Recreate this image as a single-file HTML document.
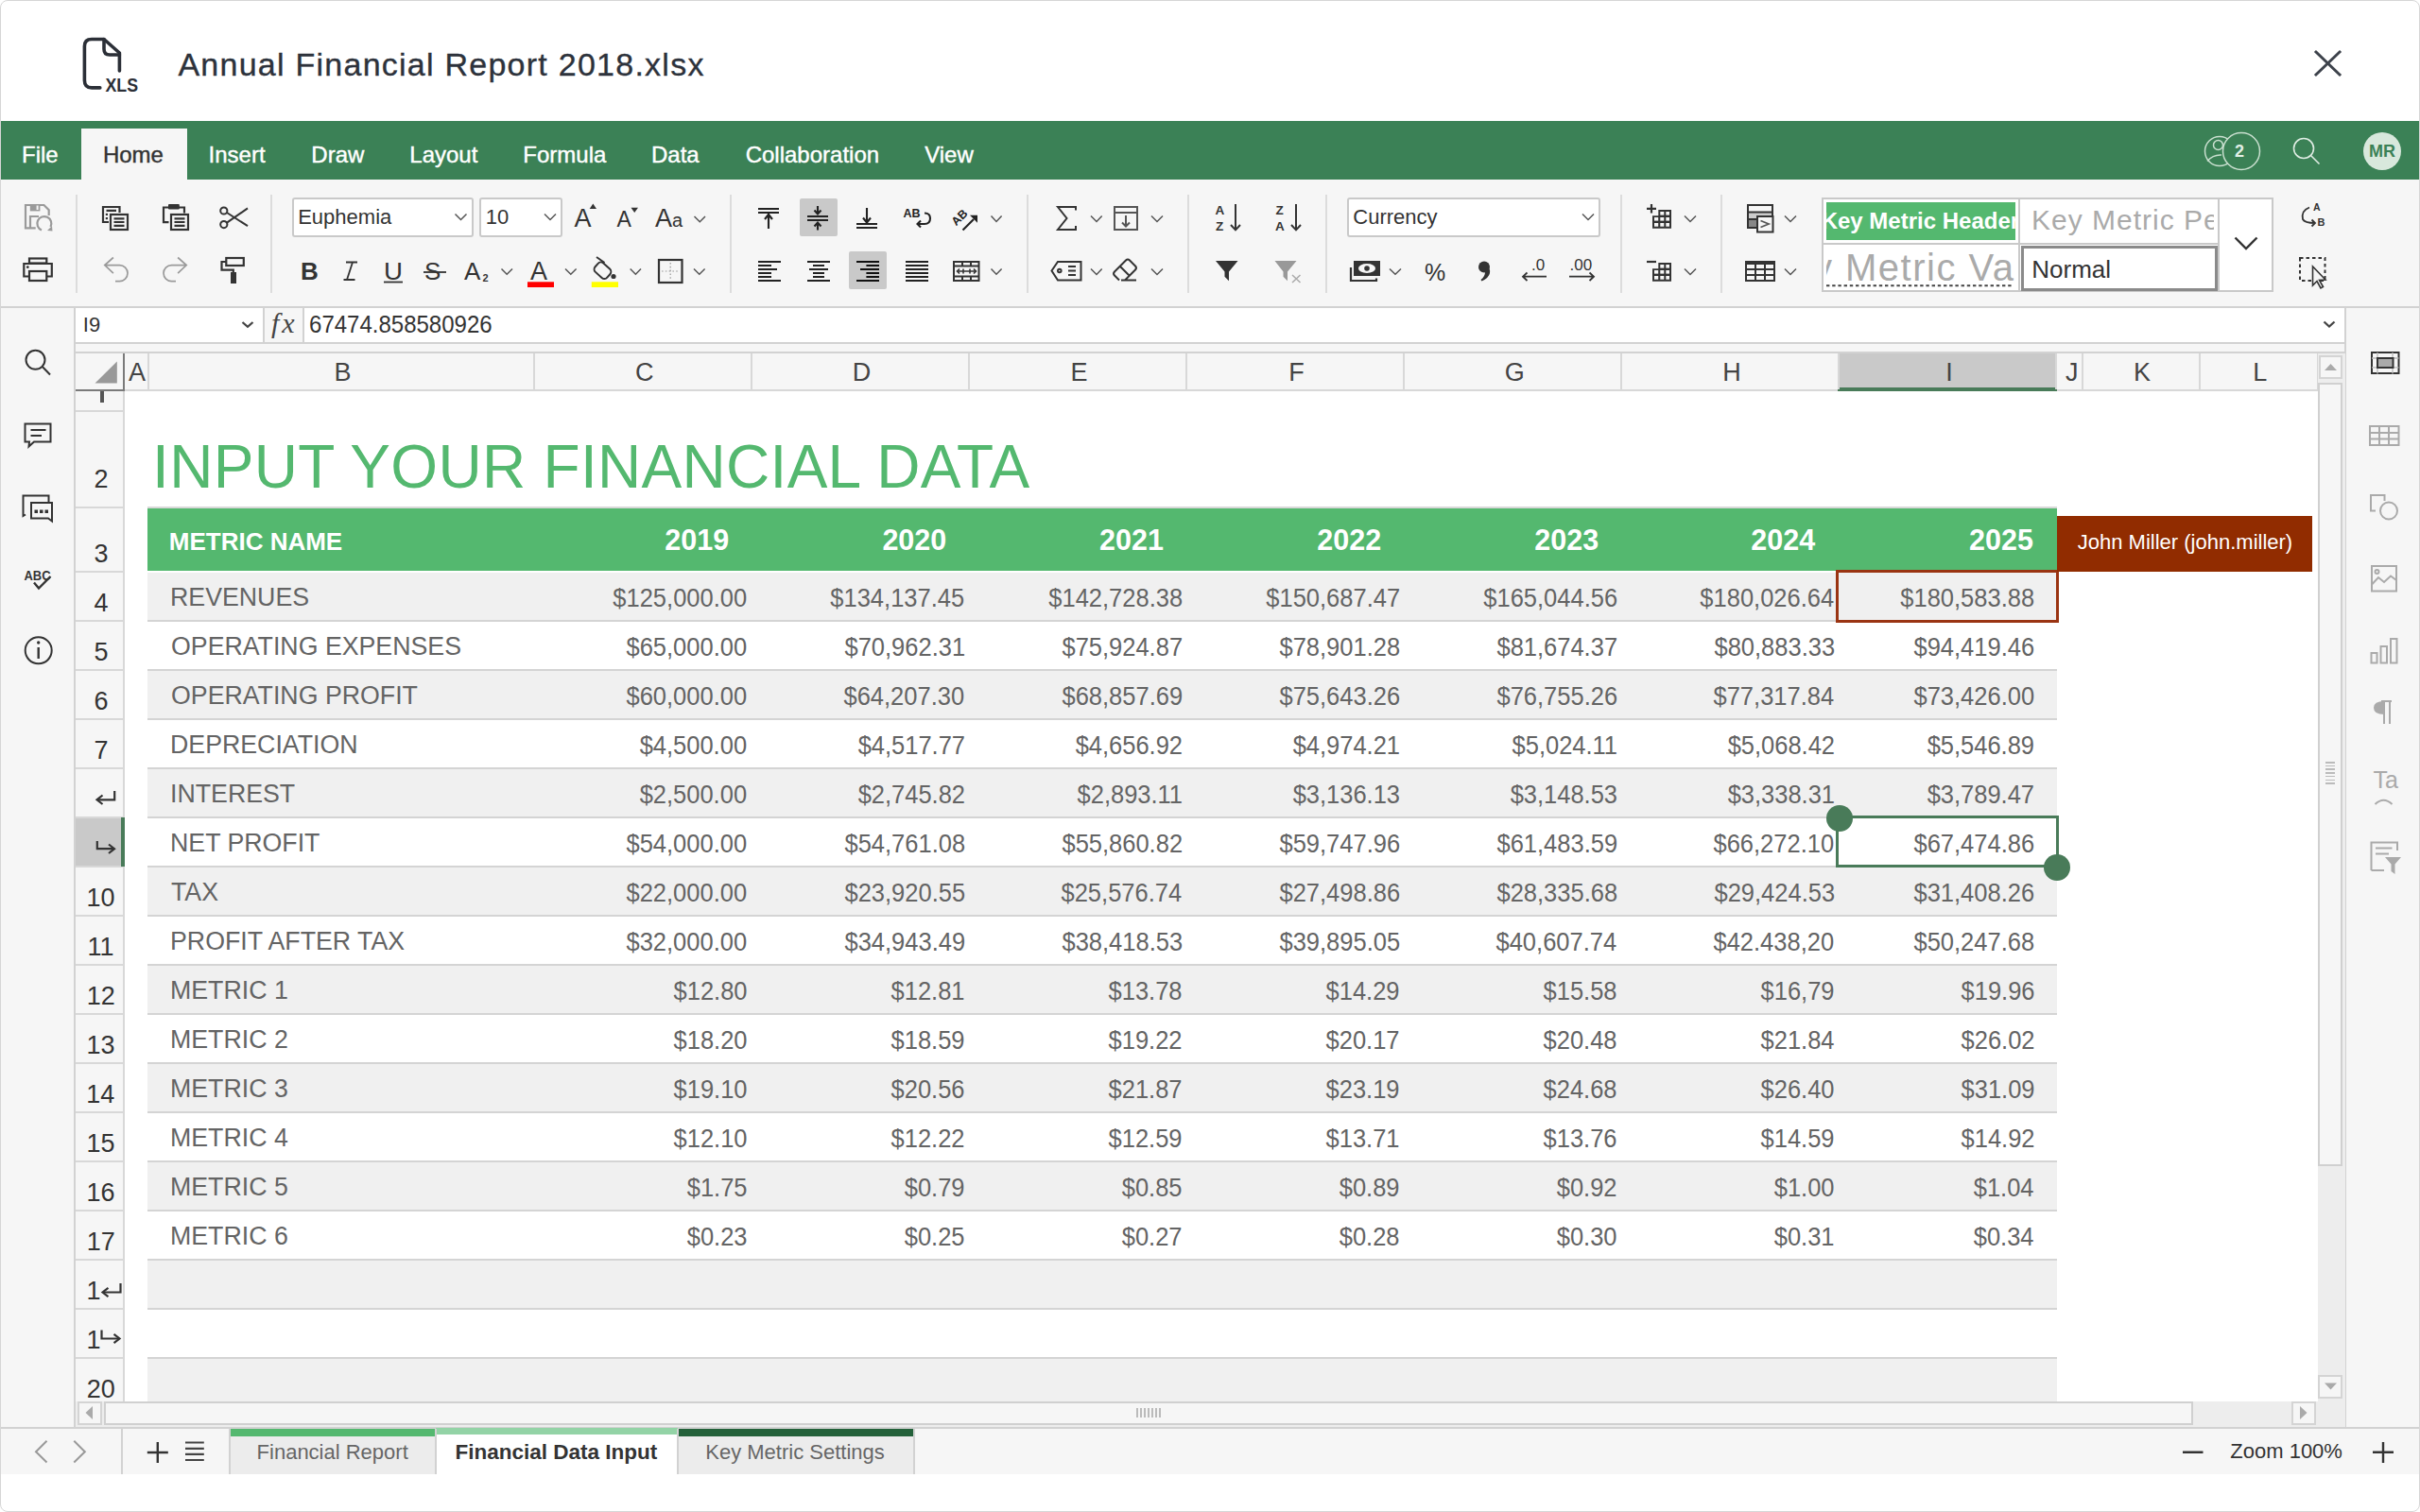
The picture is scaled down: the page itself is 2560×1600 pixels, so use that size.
<!DOCTYPE html>
<html><head><meta charset="utf-8"><title>Annual Financial Report 2018.xlsx</title>
<style>
html,body{margin:0;padding:0;}
body{width:2560px;height:1600px;position:relative;overflow:hidden;background:#fff;font-family:"Liberation Sans",sans-serif;}
.r{position:absolute;}
.t{position:absolute;white-space:nowrap;line-height:0;font-family:"Liberation Sans",sans-serif;}
.clip{position:absolute;overflow:hidden;}
#ic{position:absolute;left:0;top:0;width:2560px;height:1600px;pointer-events:none;}
#frame{position:absolute;left:0;top:0;width:2560px;height:1600px;box-sizing:border-box;border:1px solid #d6d6d6;border-radius:8px;pointer-events:none;}
</style></head><body>
<div class="r" style="left:0.00px;top:0.00px;width:2560.00px;height:128.00px;background:#fff;"></div>
<div class="t" style="left:188.43px;top:67.72px;font-size:34.00px;color:#2d323b;letter-spacing:1.25px;-webkit-text-stroke:0.35px #2d323b;">Annual Financial Report 2018.xlsx</div>
<div class="r" style="left:0.00px;top:128.00px;width:2560.00px;height:62.00px;background:#3b8156;"></div>
<div class="r" style="left:86.00px;top:136.00px;width:112.00px;height:54.00px;background:#f6f6f6;"></div>
<div class="t" style="left:23.03px;top:163.68px;font-size:24.00px;color:#fff;-webkit-text-stroke:0.4px #fff;">File</div>
<div class="t" style="left:108.93px;top:163.68px;font-size:24.00px;color:#333;-webkit-text-stroke:0.4px #333;">Home</div>
<div class="t" style="left:220.59px;top:163.68px;font-size:24.00px;color:#fff;-webkit-text-stroke:0.4px #fff;">Insert</div>
<div class="t" style="left:329.33px;top:163.68px;font-size:24.00px;color:#fff;-webkit-text-stroke:0.4px #fff;">Draw</div>
<div class="t" style="left:433.33px;top:163.68px;font-size:24.00px;color:#fff;-webkit-text-stroke:0.4px #fff;">Layout</div>
<div class="t" style="left:553.33px;top:163.68px;font-size:24.00px;color:#fff;-webkit-text-stroke:0.4px #fff;">Formula</div>
<div class="t" style="left:689.03px;top:163.68px;font-size:24.00px;color:#fff;-webkit-text-stroke:0.4px #fff;">Data</div>
<div class="t" style="left:788.68px;top:163.68px;font-size:24.00px;color:#fff;-webkit-text-stroke:0.4px #fff;">Collaboration</div>
<div class="t" style="left:978.19px;top:163.68px;font-size:24.00px;color:#fff;-webkit-text-stroke:0.4px #fff;">View</div>
<div class="r" style="left:0.00px;top:190.00px;width:2560.00px;height:134.00px;background:#f6f6f6;"></div>
<div class="r" style="left:0.00px;top:324.00px;width:2560.00px;height:2.00px;background:#d2d2d2;"></div>
<div class="r" style="left:80.00px;top:206.00px;width:2.00px;height:104.00px;background:#dcdcdc;"></div>
<div class="r" style="left:286.00px;top:206.00px;width:2.00px;height:104.00px;background:#dcdcdc;"></div>
<div class="r" style="left:772.00px;top:206.00px;width:2.00px;height:104.00px;background:#dcdcdc;"></div>
<div class="r" style="left:1086.00px;top:206.00px;width:2.00px;height:104.00px;background:#dcdcdc;"></div>
<div class="r" style="left:1256.00px;top:206.00px;width:2.00px;height:104.00px;background:#dcdcdc;"></div>
<div class="r" style="left:1402.00px;top:206.00px;width:2.00px;height:104.00px;background:#dcdcdc;"></div>
<div class="r" style="left:1714.00px;top:206.00px;width:2.00px;height:104.00px;background:#dcdcdc;"></div>
<div class="r" style="left:1820.00px;top:206.00px;width:2.00px;height:104.00px;background:#dcdcdc;"></div>
<div class="r" style="left:309.00px;top:209.00px;width:192.00px;height:42.00px;background:#fff;box-sizing:border-box;border:2px solid #c9c9c9;border-radius:3px;"></div>
<div class="t" style="left:315.20px;top:229.88px;font-size:22.00px;color:#333;">Euphemia</div>
<div class="r" style="left:507.00px;top:209.00px;width:88.00px;height:42.00px;background:#fff;box-sizing:border-box;border:2px solid #c9c9c9;border-radius:3px;"></div>
<div class="t" style="left:513.82px;top:229.88px;font-size:22.00px;color:#333;">10</div>
<div class="r" style="left:1425.00px;top:209.00px;width:268.00px;height:42.00px;background:#fff;box-sizing:border-box;border:2px solid #c9c9c9;border-radius:3px;"></div>
<div class="t" style="left:1431.28px;top:230.18px;font-size:22.00px;color:#333;">Currency</div>
<div class="r" style="left:846.00px;top:210.00px;width:40.00px;height:40.00px;background:#c9c9c9;border-radius:2px;"></div>
<div class="r" style="left:898.00px;top:266.00px;width:40.00px;height:40.00px;background:#c9c9c9;border-radius:2px;"></div>
<div class="r" style="left:1927.00px;top:209.00px;width:478.00px;height:100.00px;background:#fff;box-sizing:border-box;border:2px solid #c9c9c9;"></div>
<div class="r" style="left:1932.00px;top:214.00px;width:200.00px;height:40.00px;background:#54b86f;"></div>
<div class="r" style="left:2135.00px;top:209.00px;width:2.00px;height:100.00px;background:#c9c9c9;"></div>
<div class="r" style="left:1927.00px;top:257.00px;width:420.00px;height:2.00px;background:#c9c9c9;"></div>
<div class="r" style="left:2346.00px;top:209.00px;width:2.00px;height:100.00px;background:#c9c9c9;"></div>
<div class="clip" style="left:1932px;top:214px;width:200px;height:40px;">
<div class="t" style="left:-5.34px;top:20.08px;font-size:24.00px;color:#fff;font-weight:bold;">Key Metric Header</div>
</div>
<div class="clip" style="left:2138px;top:211px;width:204px;height:46px;">
<div class="t" style="left:10.94px;top:22.41px;font-size:30.00px;color:#aaa;letter-spacing:1.00px;">Key Metric Percent</div>
</div>
<div class="clip" style="left:1932px;top:259px;width:200px;height:48px;">
<div class="t" style="left:-66.00px;top:24.14px;font-size:40.00px;color:#aaa;letter-spacing:1.50px;">Key Metric Va</div>
</div>
<div class="r" style="left:2138.00px;top:260.00px;width:208.00px;height:47.50px;background:#fff;box-sizing:border-box;border:3px solid #8a8a8a;"></div>
<div class="t" style="left:2149.27px;top:284.99px;font-size:26.00px;color:#333;">Normal</div>
<div class="r" style="left:0.00px;top:326.00px;width:79.00px;height:1185.00px;background:#f6f6f6;"></div>
<div class="r" style="left:78.00px;top:326.00px;width:2.00px;height:1185.00px;background:#d2d2d2;"></div>
<div class="r" style="left:80.00px;top:326.00px;width:2401.00px;height:36.00px;background:#fff;"></div>
<div class="r" style="left:80.00px;top:362.00px;width:2401.00px;height:2.00px;background:#d2d2d2;"></div>
<div class="r" style="left:80.00px;top:364.00px;width:2401.00px;height:8.00px;background:#f6f6f6;"></div>
<div class="r" style="left:278.00px;top:326.00px;width:2.00px;height:36.00px;background:#d2d2d2;"></div>
<div class="r" style="left:280.00px;top:326.00px;width:41.00px;height:36.00px;background:#f6f6f6;"></div>
<div class="r" style="left:320.00px;top:326.00px;width:2.00px;height:36.00px;background:#d2d2d2;"></div>
<div class="t" style="left:87.87px;top:344.18px;font-size:22.00px;color:#333;">I9</div>
<div class="t" style="left:326.73px;top:343.34px;font-size:25.00px;color:#333;transform:scaleX(0.9600);transform-origin:1.27px 0;">67474.858580926</div>
<div class="t" style="left:287px;top:341.61px;font-family:'Liberation Serif';font-style:italic;font-size:30px;letter-spacing:3px;color:#444;">fx</div>
<div class="r" style="left:2481.00px;top:326.00px;width:79.00px;height:1185.00px;background:#f6f6f6;"></div>
<div class="r" style="left:2480.00px;top:326.00px;width:2.00px;height:1185.00px;background:#d2d2d2;"></div>
<div class="r" style="left:80.00px;top:372.00px;width:2401.00px;height:2.00px;background:#d2d2d2;"></div>
<div class="r" style="left:80.00px;top:374.00px;width:2372.00px;height:38.00px;background:#f6f6f6;"></div>
<div class="r" style="left:131.00px;top:412.00px;width:2321.00px;height:2.00px;background:#d8d8d8;"></div>
<div class="r" style="left:80.00px;top:412.00px;width:52.00px;height:2.00px;background:#7a7a7a;"></div>
<div class="r" style="left:130.00px;top:374.00px;width:2.00px;height:40.00px;background:#7a7a7a;"></div>
<div class="r" style="left:1944.00px;top:374.00px;width:232.00px;height:38.00px;background:#c9c9c9;"></div>
<div class="r" style="left:1944.00px;top:409.50px;width:232.00px;height:4.00px;background:#497b59;"></div>
<div class="r" style="left:156.00px;top:374.00px;width:2.00px;height:38.00px;background:#d8d8d8;"></div>
<div class="t" style="left:135.95px;top:394.24px;font-size:27.00px;color:#444;">A</div>
<div class="r" style="left:564.00px;top:374.00px;width:2.00px;height:38.00px;background:#d8d8d8;"></div>
<div class="t" style="left:353.60px;top:394.24px;font-size:27.00px;color:#444;">B</div>
<div class="r" style="left:794.00px;top:374.00px;width:2.00px;height:38.00px;background:#d8d8d8;"></div>
<div class="t" style="left:672.08px;top:394.24px;font-size:27.00px;color:#444;">C</div>
<div class="r" style="left:1024.00px;top:374.00px;width:2.00px;height:38.00px;background:#d8d8d8;"></div>
<div class="t" style="left:901.79px;top:394.24px;font-size:27.00px;color:#444;">D</div>
<div class="r" style="left:1254.00px;top:374.00px;width:2.00px;height:38.00px;background:#d8d8d8;"></div>
<div class="t" style="left:1132.47px;top:394.24px;font-size:27.00px;color:#444;">E</div>
<div class="r" style="left:1484.00px;top:374.00px;width:2.00px;height:38.00px;background:#d8d8d8;"></div>
<div class="t" style="left:1363.19px;top:394.24px;font-size:27.00px;color:#444;">F</div>
<div class="r" style="left:1714.00px;top:374.00px;width:2.00px;height:38.00px;background:#d8d8d8;"></div>
<div class="t" style="left:1591.83px;top:394.24px;font-size:27.00px;color:#444;">G</div>
<div class="r" style="left:1944.00px;top:374.00px;width:2.00px;height:38.00px;background:#d8d8d8;"></div>
<div class="t" style="left:1822.24px;top:394.24px;font-size:27.00px;color:#444;">H</div>
<div class="r" style="left:2174.00px;top:374.00px;width:2.00px;height:38.00px;background:#d8d8d8;"></div>
<div class="t" style="left:2058.25px;top:394.24px;font-size:27.00px;color:#444;">I</div>
<div class="r" style="left:2202.00px;top:374.00px;width:2.00px;height:38.00px;background:#d8d8d8;"></div>
<div class="t" style="left:2185.04px;top:394.24px;font-size:27.00px;color:#444;">J</div>
<div class="r" style="left:2326.00px;top:374.00px;width:2.00px;height:38.00px;background:#d8d8d8;"></div>
<div class="t" style="left:2257.04px;top:394.24px;font-size:27.00px;color:#444;">K</div>
<div class="r" style="left:2451.00px;top:374.00px;width:2.00px;height:38.00px;background:#d8d8d8;"></div>
<div class="t" style="left:2383.33px;top:394.24px;font-size:27.00px;color:#444;">L</div>
<div class="r" style="left:80.00px;top:414.00px;width:50.00px;height:1069.00px;background:#f6f6f6;"></div>
<div class="r" style="left:130.00px;top:414.00px;width:2.00px;height:1069.00px;background:#d8d8d8;"></div>
<div class="r" style="left:132.00px;top:414.00px;width:2320.00px;height:1069.00px;background:#fff;"></div>
<div class="r" style="left:80.00px;top:434.00px;width:50.00px;height:2.00px;background:#d8d8d8;"></div>
<div class="r" style="left:80.00px;top:536.00px;width:50.00px;height:2.00px;background:#d8d8d8;"></div>
<div class="r" style="left:80.00px;top:604.00px;width:50.00px;height:2.00px;background:#d8d8d8;"></div>
<div class="r" style="left:80.00px;top:656.00px;width:50.00px;height:2.00px;background:#d8d8d8;"></div>
<div class="r" style="left:80.00px;top:708.00px;width:50.00px;height:2.00px;background:#d8d8d8;"></div>
<div class="r" style="left:80.00px;top:760.00px;width:50.00px;height:2.00px;background:#d8d8d8;"></div>
<div class="r" style="left:80.00px;top:812.00px;width:50.00px;height:2.00px;background:#d8d8d8;"></div>
<div class="r" style="left:80.00px;top:864.00px;width:50.00px;height:2.00px;background:#d8d8d8;"></div>
<div class="r" style="left:80.00px;top:916.00px;width:50.00px;height:2.00px;background:#d8d8d8;"></div>
<div class="r" style="left:80.00px;top:968.00px;width:50.00px;height:2.00px;background:#d8d8d8;"></div>
<div class="r" style="left:80.00px;top:1020.00px;width:50.00px;height:2.00px;background:#d8d8d8;"></div>
<div class="r" style="left:80.00px;top:1072.00px;width:50.00px;height:2.00px;background:#d8d8d8;"></div>
<div class="r" style="left:80.00px;top:1124.00px;width:50.00px;height:2.00px;background:#d8d8d8;"></div>
<div class="r" style="left:80.00px;top:1176.00px;width:50.00px;height:2.00px;background:#d8d8d8;"></div>
<div class="r" style="left:80.00px;top:1228.00px;width:50.00px;height:2.00px;background:#d8d8d8;"></div>
<div class="r" style="left:80.00px;top:1280.00px;width:50.00px;height:2.00px;background:#d8d8d8;"></div>
<div class="r" style="left:80.00px;top:1332.00px;width:50.00px;height:2.00px;background:#d8d8d8;"></div>
<div class="r" style="left:80.00px;top:1384.00px;width:50.00px;height:2.00px;background:#d8d8d8;"></div>
<div class="r" style="left:80.00px;top:1436.00px;width:50.00px;height:2.00px;background:#d8d8d8;"></div>
<div class="r" style="left:80.00px;top:1488.00px;width:50.00px;height:2.00px;background:#d8d8d8;"></div>
<div class="r" style="left:80.00px;top:866.00px;width:48.00px;height:50.00px;background:#c9c9c9;"></div>
<div class="r" style="left:128.00px;top:865.00px;width:4.00px;height:52.00px;background:#497b59;"></div>
<div class="r" style="left:156.00px;top:536.00px;width:2020.00px;height:2.00px;background:#d8d8d8;"></div>
<div class="r" style="left:156.00px;top:537.50px;width:2020.00px;height:66.50px;background:#54b86f;"></div>
<div class="r" style="left:156.00px;top:606.00px;width:2020.00px;height:50.00px;background:#f0f0f0;"></div>
<div class="r" style="left:156.00px;top:656.00px;width:2020.00px;height:2.00px;background:#d4d4d4;"></div>
<div class="r" style="left:156.00px;top:708.00px;width:2020.00px;height:2.00px;background:#d4d4d4;"></div>
<div class="r" style="left:156.00px;top:710.00px;width:2020.00px;height:50.00px;background:#f0f0f0;"></div>
<div class="r" style="left:156.00px;top:760.00px;width:2020.00px;height:2.00px;background:#d4d4d4;"></div>
<div class="r" style="left:156.00px;top:812.00px;width:2020.00px;height:2.00px;background:#d4d4d4;"></div>
<div class="r" style="left:156.00px;top:814.00px;width:2020.00px;height:50.00px;background:#f0f0f0;"></div>
<div class="r" style="left:156.00px;top:864.00px;width:2020.00px;height:2.00px;background:#d4d4d4;"></div>
<div class="r" style="left:156.00px;top:916.00px;width:2020.00px;height:2.00px;background:#d4d4d4;"></div>
<div class="r" style="left:156.00px;top:918.00px;width:2020.00px;height:50.00px;background:#f0f0f0;"></div>
<div class="r" style="left:156.00px;top:968.00px;width:2020.00px;height:2.00px;background:#d4d4d4;"></div>
<div class="r" style="left:156.00px;top:1020.00px;width:2020.00px;height:2.00px;background:#d4d4d4;"></div>
<div class="r" style="left:156.00px;top:1022.00px;width:2020.00px;height:50.00px;background:#f0f0f0;"></div>
<div class="r" style="left:156.00px;top:1072.00px;width:2020.00px;height:2.00px;background:#d4d4d4;"></div>
<div class="r" style="left:156.00px;top:1124.00px;width:2020.00px;height:2.00px;background:#d4d4d4;"></div>
<div class="r" style="left:156.00px;top:1126.00px;width:2020.00px;height:50.00px;background:#f0f0f0;"></div>
<div class="r" style="left:156.00px;top:1176.00px;width:2020.00px;height:2.00px;background:#d4d4d4;"></div>
<div class="r" style="left:156.00px;top:1228.00px;width:2020.00px;height:2.00px;background:#d4d4d4;"></div>
<div class="r" style="left:156.00px;top:1230.00px;width:2020.00px;height:50.00px;background:#f0f0f0;"></div>
<div class="r" style="left:156.00px;top:1280.00px;width:2020.00px;height:2.00px;background:#d4d4d4;"></div>
<div class="r" style="left:156.00px;top:1332.00px;width:2020.00px;height:2.00px;background:#d4d4d4;"></div>
<div class="r" style="left:156.00px;top:1334.00px;width:2020.00px;height:50.00px;background:#f0f0f0;"></div>
<div class="r" style="left:156.00px;top:1384.00px;width:2020.00px;height:2.00px;background:#d4d4d4;"></div>
<div class="r" style="left:156.00px;top:1436.00px;width:2020.00px;height:2.00px;background:#d4d4d4;"></div>
<div class="r" style="left:156.00px;top:1438.00px;width:2020.00px;height:45.00px;background:#f0f0f0;"></div>
<div class="t" style="left:161.09px;top:493.82px;font-size:64.00px;color:#54b86f;letter-spacing:0.30px;">INPUT YOUR FINANCIAL DATA</div>
<div class="t" style="left:178.76px;top:572.99px;font-size:26.00px;color:#fff;font-weight:bold;">METRIC NAME</div>
<div class="t" style="left:703.28px;top:571.43px;font-size:30.50px;color:#fff;font-weight:bold;">2019</div>
<div class="t" style="left:933.40px;top:571.43px;font-size:30.50px;color:#fff;font-weight:bold;">2020</div>
<div class="t" style="left:1163.00px;top:571.43px;font-size:30.50px;color:#fff;font-weight:bold;">2021</div>
<div class="t" style="left:1393.37px;top:571.43px;font-size:30.50px;color:#fff;font-weight:bold;">2022</div>
<div class="t" style="left:1623.25px;top:571.43px;font-size:30.50px;color:#fff;font-weight:bold;">2023</div>
<div class="t" style="left:1852.31px;top:571.43px;font-size:30.50px;color:#fff;font-weight:bold;">2024</div>
<div class="t" style="left:2083.00px;top:571.43px;font-size:30.50px;color:#fff;font-weight:bold;">2025</div>
<div class="t" style="left:179.79px;top:632.44px;font-size:27.00px;color:#646464;transform:scaleX(0.9900);transform-origin:2.21px 0;">REVENUES</div>
<div class="t" style="left:640.41px;top:632.94px;font-size:27.00px;color:#646464;transform:scaleX(0.9440);transform-origin:149.09px 0;">$125,000.00</div>
<div class="t" style="left:870.49px;top:632.94px;font-size:27.00px;color:#646464;transform:scaleX(0.9440);transform-origin:149.01px 0;">$134,137.45</div>
<div class="t" style="left:1100.53px;top:632.94px;font-size:27.00px;color:#646464;transform:scaleX(0.9440);transform-origin:148.97px 0;">$142,728.38</div>
<div class="t" style="left:1330.71px;top:632.94px;font-size:27.00px;color:#646464;transform:scaleX(0.9440);transform-origin:148.79px 0;">$150,687.47</div>
<div class="t" style="left:1560.54px;top:632.94px;font-size:27.00px;color:#646464;transform:scaleX(0.9440);transform-origin:148.96px 0;">$165,044.56</div>
<div class="t" style="left:1790.15px;top:632.94px;font-size:27.00px;color:#646464;transform:scaleX(0.9440);transform-origin:149.35px 0;">$180,026.64</div>
<div class="t" style="left:2002.03px;top:632.94px;font-size:27.00px;color:#646464;transform:scaleX(0.9440);transform-origin:148.97px 0;">$180,583.88</div>
<div class="t" style="left:180.72px;top:684.44px;font-size:27.00px;color:#646464;transform:scaleX(0.9900);transform-origin:1.28px 0;">OPERATING EXPENSES</div>
<div class="t" style="left:655.43px;top:684.94px;font-size:27.00px;color:#646464;transform:scaleX(0.9440);transform-origin:134.07px 0;">$65,000.00</div>
<div class="t" style="left:885.69px;top:684.94px;font-size:27.00px;color:#646464;transform:scaleX(0.9440);transform-origin:133.81px 0;">$70,962.31</div>
<div class="t" style="left:1115.73px;top:684.94px;font-size:27.00px;color:#646464;transform:scaleX(0.9440);transform-origin:133.77px 0;">$75,924.87</div>
<div class="t" style="left:1345.55px;top:684.94px;font-size:27.00px;color:#646464;transform:scaleX(0.9440);transform-origin:133.95px 0;">$78,901.28</div>
<div class="t" style="left:1575.73px;top:684.94px;font-size:27.00px;color:#646464;transform:scaleX(0.9440);transform-origin:133.77px 0;">$81,674.37</div>
<div class="t" style="left:1805.56px;top:684.94px;font-size:27.00px;color:#646464;transform:scaleX(0.9440);transform-origin:133.94px 0;">$80,883.33</div>
<div class="t" style="left:2017.06px;top:684.94px;font-size:27.00px;color:#646464;transform:scaleX(0.9440);transform-origin:133.94px 0;">$94,419.46</div>
<div class="t" style="left:180.72px;top:736.44px;font-size:27.00px;color:#646464;transform:scaleX(0.9900);transform-origin:1.28px 0;">OPERATING PROFIT</div>
<div class="t" style="left:655.43px;top:736.94px;font-size:27.00px;color:#646464;transform:scaleX(0.9440);transform-origin:134.07px 0;">$60,000.00</div>
<div class="t" style="left:885.43px;top:736.94px;font-size:27.00px;color:#646464;transform:scaleX(0.9440);transform-origin:134.07px 0;">$64,207.30</div>
<div class="t" style="left:1115.65px;top:736.94px;font-size:27.00px;color:#646464;transform:scaleX(0.9440);transform-origin:133.85px 0;">$68,857.69</div>
<div class="t" style="left:1345.56px;top:736.94px;font-size:27.00px;color:#646464;transform:scaleX(0.9440);transform-origin:133.94px 0;">$75,643.26</div>
<div class="t" style="left:1575.56px;top:736.94px;font-size:27.00px;color:#646464;transform:scaleX(0.9440);transform-origin:133.94px 0;">$76,755.26</div>
<div class="t" style="left:1805.16px;top:736.94px;font-size:27.00px;color:#646464;transform:scaleX(0.9440);transform-origin:134.34px 0;">$77,317.84</div>
<div class="t" style="left:2016.93px;top:736.94px;font-size:27.00px;color:#646464;transform:scaleX(0.9440);transform-origin:134.07px 0;">$73,426.00</div>
<div class="t" style="left:179.79px;top:788.44px;font-size:27.00px;color:#646464;transform:scaleX(0.9900);transform-origin:2.21px 0;">DEPRECIATION</div>
<div class="t" style="left:670.44px;top:788.94px;font-size:27.00px;color:#646464;transform:scaleX(0.9440);transform-origin:119.06px 0;">$4,500.00</div>
<div class="t" style="left:900.75px;top:788.94px;font-size:27.00px;color:#646464;transform:scaleX(0.9440);transform-origin:118.75px 0;">$4,517.77</div>
<div class="t" style="left:1130.75px;top:788.94px;font-size:27.00px;color:#646464;transform:scaleX(0.9440);transform-origin:118.75px 0;">$4,656.92</div>
<div class="t" style="left:1360.71px;top:788.94px;font-size:27.00px;color:#646464;transform:scaleX(0.9440);transform-origin:118.79px 0;">$4,974.21</div>
<div class="t" style="left:1592.71px;top:788.94px;font-size:27.00px;color:#646464;transform:scaleX(0.9440);transform-origin:116.79px 0;">$5,024.11</div>
<div class="t" style="left:1820.75px;top:788.94px;font-size:27.00px;color:#646464;transform:scaleX(0.9440);transform-origin:118.75px 0;">$5,068.42</div>
<div class="t" style="left:2032.17px;top:788.94px;font-size:27.00px;color:#646464;transform:scaleX(0.9440);transform-origin:118.83px 0;">$5,546.89</div>
<div class="t" style="left:179.51px;top:840.44px;font-size:27.00px;color:#646464;transform:scaleX(0.9900);transform-origin:2.49px 0;">INTEREST</div>
<div class="t" style="left:670.44px;top:840.94px;font-size:27.00px;color:#646464;transform:scaleX(0.9440);transform-origin:119.06px 0;">$2,500.00</div>
<div class="t" style="left:900.75px;top:840.94px;font-size:27.00px;color:#646464;transform:scaleX(0.9440);transform-origin:118.75px 0;">$2,745.82</div>
<div class="t" style="left:1132.71px;top:840.94px;font-size:27.00px;color:#646464;transform:scaleX(0.9440);transform-origin:116.79px 0;">$2,893.11</div>
<div class="t" style="left:1360.57px;top:840.94px;font-size:27.00px;color:#646464;transform:scaleX(0.9440);transform-origin:118.93px 0;">$3,136.13</div>
<div class="t" style="left:1590.57px;top:840.94px;font-size:27.00px;color:#646464;transform:scaleX(0.9440);transform-origin:118.93px 0;">$3,148.53</div>
<div class="t" style="left:1820.71px;top:840.94px;font-size:27.00px;color:#646464;transform:scaleX(0.9440);transform-origin:118.79px 0;">$3,338.31</div>
<div class="t" style="left:2032.25px;top:840.94px;font-size:27.00px;color:#646464;transform:scaleX(0.9440);transform-origin:118.75px 0;">$3,789.47</div>
<div class="t" style="left:179.79px;top:892.44px;font-size:27.00px;color:#646464;transform:scaleX(0.9900);transform-origin:2.21px 0;">NET PROFIT</div>
<div class="t" style="left:655.43px;top:892.94px;font-size:27.00px;color:#646464;transform:scaleX(0.9440);transform-origin:134.07px 0;">$54,000.00</div>
<div class="t" style="left:885.55px;top:892.94px;font-size:27.00px;color:#646464;transform:scaleX(0.9440);transform-origin:133.95px 0;">$54,761.08</div>
<div class="t" style="left:1115.73px;top:892.94px;font-size:27.00px;color:#646464;transform:scaleX(0.9440);transform-origin:133.77px 0;">$55,860.82</div>
<div class="t" style="left:1345.56px;top:892.94px;font-size:27.00px;color:#646464;transform:scaleX(0.9440);transform-origin:133.94px 0;">$59,747.96</div>
<div class="t" style="left:1575.65px;top:892.94px;font-size:27.00px;color:#646464;transform:scaleX(0.9440);transform-origin:133.85px 0;">$61,483.59</div>
<div class="t" style="left:1805.43px;top:892.94px;font-size:27.00px;color:#646464;transform:scaleX(0.9440);transform-origin:134.07px 0;">$66,272.10</div>
<div class="t" style="left:2017.06px;top:892.94px;font-size:27.00px;color:#646464;transform:scaleX(0.9440);transform-origin:133.94px 0;">$67,474.86</div>
<div class="t" style="left:181.39px;top:944.44px;font-size:27.00px;color:#646464;transform:scaleX(0.9900);transform-origin:0.61px 0;">TAX</div>
<div class="t" style="left:655.43px;top:944.94px;font-size:27.00px;color:#646464;transform:scaleX(0.9440);transform-origin:134.07px 0;">$22,000.00</div>
<div class="t" style="left:885.51px;top:944.94px;font-size:27.00px;color:#646464;transform:scaleX(0.9440);transform-origin:133.99px 0;">$23,920.55</div>
<div class="t" style="left:1115.16px;top:944.94px;font-size:27.00px;color:#646464;transform:scaleX(0.9440);transform-origin:134.34px 0;">$25,576.74</div>
<div class="t" style="left:1345.56px;top:944.94px;font-size:27.00px;color:#646464;transform:scaleX(0.9440);transform-origin:133.94px 0;">$27,498.86</div>
<div class="t" style="left:1575.55px;top:944.94px;font-size:27.00px;color:#646464;transform:scaleX(0.9440);transform-origin:133.95px 0;">$28,335.68</div>
<div class="t" style="left:1805.56px;top:944.94px;font-size:27.00px;color:#646464;transform:scaleX(0.9440);transform-origin:133.94px 0;">$29,424.53</div>
<div class="t" style="left:2017.06px;top:944.94px;font-size:27.00px;color:#646464;transform:scaleX(0.9440);transform-origin:133.94px 0;">$31,408.26</div>
<div class="t" style="left:179.79px;top:996.44px;font-size:27.00px;color:#646464;transform:scaleX(0.9900);transform-origin:2.21px 0;">PROFIT AFTER TAX</div>
<div class="t" style="left:655.43px;top:996.94px;font-size:27.00px;color:#646464;transform:scaleX(0.9440);transform-origin:134.07px 0;">$32,000.00</div>
<div class="t" style="left:885.65px;top:996.94px;font-size:27.00px;color:#646464;transform:scaleX(0.9440);transform-origin:133.85px 0;">$34,943.49</div>
<div class="t" style="left:1115.56px;top:996.94px;font-size:27.00px;color:#646464;transform:scaleX(0.9440);transform-origin:133.94px 0;">$38,418.53</div>
<div class="t" style="left:1345.51px;top:996.94px;font-size:27.00px;color:#646464;transform:scaleX(0.9440);transform-origin:133.99px 0;">$39,895.05</div>
<div class="t" style="left:1575.16px;top:996.94px;font-size:27.00px;color:#646464;transform:scaleX(0.9440);transform-origin:134.34px 0;">$40,607.74</div>
<div class="t" style="left:1805.43px;top:996.94px;font-size:27.00px;color:#646464;transform:scaleX(0.9440);transform-origin:134.07px 0;">$42.438,20</div>
<div class="t" style="left:2017.05px;top:996.94px;font-size:27.00px;color:#646464;transform:scaleX(0.9440);transform-origin:133.95px 0;">$50,247.68</div>
<div class="t" style="left:179.79px;top:1048.44px;font-size:27.00px;color:#646464;transform:scaleX(0.9900);transform-origin:2.21px 0;">METRIC 1</div>
<div class="t" style="left:707.98px;top:1048.94px;font-size:27.00px;color:#646464;transform:scaleX(0.9440);transform-origin:81.53px 0;">$12.80</div>
<div class="t" style="left:938.24px;top:1048.94px;font-size:27.00px;color:#646464;transform:scaleX(0.9440);transform-origin:81.26px 0;">$12.81</div>
<div class="t" style="left:1168.09px;top:1048.94px;font-size:27.00px;color:#646464;transform:scaleX(0.9440);transform-origin:81.41px 0;">$13.78</div>
<div class="t" style="left:1398.20px;top:1048.94px;font-size:27.00px;color:#646464;transform:scaleX(0.9440);transform-origin:81.30px 0;">$14.29</div>
<div class="t" style="left:1628.09px;top:1048.94px;font-size:27.00px;color:#646464;transform:scaleX(0.9440);transform-origin:81.41px 0;">$15.58</div>
<div class="t" style="left:1858.20px;top:1048.94px;font-size:27.00px;color:#646464;transform:scaleX(0.9440);transform-origin:81.30px 0;">$16,79</div>
<div class="t" style="left:2069.61px;top:1048.94px;font-size:27.00px;color:#646464;transform:scaleX(0.9440);transform-origin:81.39px 0;">$19.96</div>
<div class="t" style="left:179.79px;top:1100.44px;font-size:27.00px;color:#646464;transform:scaleX(0.9900);transform-origin:2.21px 0;">METRIC 2</div>
<div class="t" style="left:707.98px;top:1100.94px;font-size:27.00px;color:#646464;transform:scaleX(0.9440);transform-origin:81.53px 0;">$18.20</div>
<div class="t" style="left:938.20px;top:1100.94px;font-size:27.00px;color:#646464;transform:scaleX(0.9440);transform-origin:81.30px 0;">$18.59</div>
<div class="t" style="left:1168.28px;top:1100.94px;font-size:27.00px;color:#646464;transform:scaleX(0.9440);transform-origin:81.22px 0;">$19.22</div>
<div class="t" style="left:1398.28px;top:1100.94px;font-size:27.00px;color:#646464;transform:scaleX(0.9440);transform-origin:81.22px 0;">$20.17</div>
<div class="t" style="left:1628.09px;top:1100.94px;font-size:27.00px;color:#646464;transform:scaleX(0.9440);transform-origin:81.41px 0;">$20.48</div>
<div class="t" style="left:1857.71px;top:1100.94px;font-size:27.00px;color:#646464;transform:scaleX(0.9440);transform-origin:81.79px 0;">$21.84</div>
<div class="t" style="left:2069.78px;top:1100.94px;font-size:27.00px;color:#646464;transform:scaleX(0.9440);transform-origin:81.22px 0;">$26.02</div>
<div class="t" style="left:179.79px;top:1152.44px;font-size:27.00px;color:#646464;transform:scaleX(0.9900);transform-origin:2.21px 0;">METRIC 3</div>
<div class="t" style="left:707.98px;top:1152.94px;font-size:27.00px;color:#646464;transform:scaleX(0.9440);transform-origin:81.53px 0;">$19.10</div>
<div class="t" style="left:938.11px;top:1152.94px;font-size:27.00px;color:#646464;transform:scaleX(0.9440);transform-origin:81.39px 0;">$20.56</div>
<div class="t" style="left:1168.28px;top:1152.94px;font-size:27.00px;color:#646464;transform:scaleX(0.9440);transform-origin:81.22px 0;">$21.87</div>
<div class="t" style="left:1398.20px;top:1152.94px;font-size:27.00px;color:#646464;transform:scaleX(0.9440);transform-origin:81.30px 0;">$23.19</div>
<div class="t" style="left:1628.09px;top:1152.94px;font-size:27.00px;color:#646464;transform:scaleX(0.9440);transform-origin:81.41px 0;">$24.68</div>
<div class="t" style="left:1857.97px;top:1152.94px;font-size:27.00px;color:#646464;transform:scaleX(0.9440);transform-origin:81.53px 0;">$26.40</div>
<div class="t" style="left:2069.70px;top:1152.94px;font-size:27.00px;color:#646464;transform:scaleX(0.9440);transform-origin:81.30px 0;">$31.09</div>
<div class="t" style="left:179.79px;top:1204.44px;font-size:27.00px;color:#646464;transform:scaleX(0.9900);transform-origin:2.21px 0;">METRIC 4</div>
<div class="t" style="left:707.98px;top:1204.94px;font-size:27.00px;color:#646464;transform:scaleX(0.9440);transform-origin:81.53px 0;">$12.10</div>
<div class="t" style="left:938.28px;top:1204.94px;font-size:27.00px;color:#646464;transform:scaleX(0.9440);transform-origin:81.22px 0;">$12.22</div>
<div class="t" style="left:1168.20px;top:1204.94px;font-size:27.00px;color:#646464;transform:scaleX(0.9440);transform-origin:81.30px 0;">$12.59</div>
<div class="t" style="left:1398.24px;top:1204.94px;font-size:27.00px;color:#646464;transform:scaleX(0.9440);transform-origin:81.26px 0;">$13.71</div>
<div class="t" style="left:1628.11px;top:1204.94px;font-size:27.00px;color:#646464;transform:scaleX(0.9440);transform-origin:81.39px 0;">$13.76</div>
<div class="t" style="left:1858.20px;top:1204.94px;font-size:27.00px;color:#646464;transform:scaleX(0.9440);transform-origin:81.30px 0;">$14.59</div>
<div class="t" style="left:2069.78px;top:1204.94px;font-size:27.00px;color:#646464;transform:scaleX(0.9440);transform-origin:81.22px 0;">$14.92</div>
<div class="t" style="left:179.79px;top:1256.44px;font-size:27.00px;color:#646464;transform:scaleX(0.9900);transform-origin:2.21px 0;">METRIC 5</div>
<div class="t" style="left:723.07px;top:1256.94px;font-size:27.00px;color:#646464;transform:scaleX(0.9440);transform-origin:66.43px 0;">$1.75</div>
<div class="t" style="left:953.21px;top:1256.94px;font-size:27.00px;color:#646464;transform:scaleX(0.9440);transform-origin:66.29px 0;">$0.79</div>
<div class="t" style="left:1183.07px;top:1256.94px;font-size:27.00px;color:#646464;transform:scaleX(0.9440);transform-origin:66.43px 0;">$0.85</div>
<div class="t" style="left:1413.21px;top:1256.94px;font-size:27.00px;color:#646464;transform:scaleX(0.9440);transform-origin:66.29px 0;">$0.89</div>
<div class="t" style="left:1643.29px;top:1256.94px;font-size:27.00px;color:#646464;transform:scaleX(0.9440);transform-origin:66.21px 0;">$0.92</div>
<div class="t" style="left:1872.99px;top:1256.94px;font-size:27.00px;color:#646464;transform:scaleX(0.9440);transform-origin:66.51px 0;">$1.00</div>
<div class="t" style="left:2084.23px;top:1256.94px;font-size:27.00px;color:#646464;transform:scaleX(0.9440);transform-origin:66.77px 0;">$1.04</div>
<div class="t" style="left:179.79px;top:1308.44px;font-size:27.00px;color:#646464;transform:scaleX(0.9900);transform-origin:2.21px 0;">METRIC 6</div>
<div class="t" style="left:723.12px;top:1308.94px;font-size:27.00px;color:#646464;transform:scaleX(0.9440);transform-origin:66.38px 0;">$0.23</div>
<div class="t" style="left:953.07px;top:1308.94px;font-size:27.00px;color:#646464;transform:scaleX(0.9440);transform-origin:66.43px 0;">$0.25</div>
<div class="t" style="left:1183.29px;top:1308.94px;font-size:27.00px;color:#646464;transform:scaleX(0.9440);transform-origin:66.21px 0;">$0.27</div>
<div class="t" style="left:1413.11px;top:1308.94px;font-size:27.00px;color:#646464;transform:scaleX(0.9440);transform-origin:66.39px 0;">$0.28</div>
<div class="t" style="left:1642.99px;top:1308.94px;font-size:27.00px;color:#646464;transform:scaleX(0.9440);transform-origin:66.51px 0;">$0.30</div>
<div class="t" style="left:1873.25px;top:1308.94px;font-size:27.00px;color:#646464;transform:scaleX(0.9440);transform-origin:66.25px 0;">$0.31</div>
<div class="t" style="left:2084.23px;top:1308.94px;font-size:27.00px;color:#646464;transform:scaleX(0.9440);transform-origin:66.77px 0;">$0.34</div>
<div class="r" style="left:106.30px;top:414.00px;width:3.50px;height:12.00px;background:#555;"></div>
<div class="t" style="left:99.49px;top:506.64px;font-size:27.00px;color:#333;">2</div>
<div class="t" style="left:99.57px;top:585.64px;font-size:27.00px;color:#333;">3</div>
<div class="t" style="left:91.83px;top:1470.34px;font-size:27.00px;color:#333;">20</div>
<div class="t" style="left:99.58px;top:637.64px;font-size:27.00px;color:#333;">4</div>
<div class="t" style="left:99.52px;top:689.64px;font-size:27.00px;color:#333;">5</div>
<div class="t" style="left:99.40px;top:741.64px;font-size:27.00px;color:#333;">6</div>
<div class="t" style="left:99.48px;top:793.64px;font-size:27.00px;color:#333;">7</div>
<div class="t" style="left:91.48px;top:949.64px;font-size:27.00px;color:#333;">10</div>
<div class="t" style="left:92.62px;top:1001.64px;font-size:27.00px;color:#333;">11</div>
<div class="t" style="left:91.64px;top:1053.64px;font-size:27.00px;color:#333;">12</div>
<div class="t" style="left:91.55px;top:1105.64px;font-size:27.00px;color:#333;">13</div>
<div class="t" style="left:91.35px;top:1157.64px;font-size:27.00px;color:#333;">14</div>
<div class="t" style="left:91.52px;top:1209.64px;font-size:27.00px;color:#333;">15</div>
<div class="t" style="left:91.55px;top:1261.64px;font-size:27.00px;color:#333;">16</div>
<div class="t" style="left:91.64px;top:1313.64px;font-size:27.00px;color:#333;">17</div>
<div class="t" style="left:91.44px;top:1365.64px;font-size:27.00px;color:#333;">1</div>
<div class="t" style="left:91.44px;top:1417.64px;font-size:27.00px;color:#333;">1</div>
<div class="r" style="left:1942.00px;top:602.60px;width:236.00px;height:56.40px;background:transparent;box-sizing:border-box;border:3px solid #9a3412;"></div>
<div class="r" style="left:1942.00px;top:863.00px;width:236.00px;height:55.00px;background:transparent;box-sizing:border-box;border:3px solid #497b59;"></div>
<div class="r" style="left:1932.00px;top:852.00px;width:28.00px;height:28.00px;background:#497b59;border-radius:50%;"></div>
<div class="r" style="left:2162.00px;top:904.00px;width:28.00px;height:28.00px;background:#497b59;border-radius:50%;"></div>
<div class="r" style="left:2176.00px;top:546.00px;width:270.00px;height:59.00px;background:#912c00;"></div>
<div class="t" style="left:2197.81px;top:574.38px;font-size:22.00px;color:#fff;">John Miller (john.miller)</div>
<div class="r" style="left:2452.00px;top:374.00px;width:29.00px;height:1137.00px;background:#ededed;"></div>
<div class="r" style="left:2453.00px;top:376.00px;width:25.00px;height:25.00px;background:#f6f6f6;box-sizing:border-box;border:2px solid #d4d4d4;"></div>
<div class="r" style="left:2452.00px;top:405.00px;width:26.00px;height:828.50px;background:#f6f6f6;box-sizing:border-box;border:2px solid #d0d0d0;"></div>
<div class="r" style="left:2452.00px;top:1454.50px;width:26.00px;height:25.00px;background:#f6f6f6;box-sizing:border-box;border:2px solid #d4d4d4;"></div>
<div class="r" style="left:2459.50px;top:806.00px;width:10.50px;height:1.50px;background:#bbb;"></div>
<div class="r" style="left:2459.50px;top:809.70px;width:10.50px;height:1.50px;background:#bbb;"></div>
<div class="r" style="left:2459.50px;top:813.40px;width:10.50px;height:1.50px;background:#bbb;"></div>
<div class="r" style="left:2459.50px;top:817.10px;width:10.50px;height:1.50px;background:#bbb;"></div>
<div class="r" style="left:2459.50px;top:820.80px;width:10.50px;height:1.50px;background:#bbb;"></div>
<div class="r" style="left:2459.50px;top:824.50px;width:10.50px;height:1.50px;background:#bbb;"></div>
<div class="r" style="left:2459.50px;top:828.20px;width:10.50px;height:1.50px;background:#bbb;"></div>
<div class="r" style="left:80.00px;top:1482.50px;width:2372.00px;height:28.50px;background:#ededed;"></div>
<div class="r" style="left:82.00px;top:1482.50px;width:26.00px;height:25.00px;background:#f6f6f6;box-sizing:border-box;border:2px solid #d4d4d4;"></div>
<div class="r" style="left:110.00px;top:1482.50px;width:2210.00px;height:25.00px;background:#f6f6f6;box-sizing:border-box;border:2px solid #d0d0d0;"></div>
<div class="r" style="left:2424.00px;top:1482.50px;width:26.00px;height:25.00px;background:#f6f6f6;box-sizing:border-box;border:2px solid #d4d4d4;"></div>
<div class="r" style="left:1202.00px;top:1490.00px;width:2.00px;height:10.00px;background:#bbb;"></div>
<div class="r" style="left:1206.00px;top:1490.00px;width:2.00px;height:10.00px;background:#bbb;"></div>
<div class="r" style="left:1210.00px;top:1490.00px;width:2.00px;height:10.00px;background:#bbb;"></div>
<div class="r" style="left:1214.00px;top:1490.00px;width:2.00px;height:10.00px;background:#bbb;"></div>
<div class="r" style="left:1218.00px;top:1490.00px;width:2.00px;height:10.00px;background:#bbb;"></div>
<div class="r" style="left:1222.00px;top:1490.00px;width:2.00px;height:10.00px;background:#bbb;"></div>
<div class="r" style="left:1226.00px;top:1490.00px;width:2.00px;height:10.00px;background:#bbb;"></div>
<div class="r" style="left:0.00px;top:1510.00px;width:2560.00px;height:2.00px;background:#d2d2d2;"></div>
<div class="r" style="left:0.00px;top:1512.00px;width:2560.00px;height:48.00px;background:#f6f6f6;"></div>
<div class="r" style="left:128.00px;top:1512.00px;width:2.00px;height:48.00px;background:#d2d2d2;"></div>
<div class="r" style="left:242.00px;top:1512.00px;width:2.00px;height:48.00px;background:#d2d2d2;"></div>
<div class="r" style="left:244.00px;top:1512.00px;width:217.00px;height:48.00px;background:#ececec;"></div>
<div class="r" style="left:244.00px;top:1512.00px;width:217.00px;height:8.00px;background:#54b86f;"></div>
<div class="r" style="left:461.00px;top:1511.00px;width:256.00px;height:49.00px;background:#fff;"></div>
<div class="r" style="left:461.00px;top:1511.00px;width:256.00px;height:7.00px;background:#93d3a6;"></div>
<div class="r" style="left:717.00px;top:1512.00px;width:250.00px;height:48.00px;background:#ececec;"></div>
<div class="r" style="left:717.00px;top:1512.00px;width:250.00px;height:8.00px;background:#24613a;"></div>
<div class="r" style="left:460.00px;top:1512.00px;width:2.00px;height:48.00px;background:#d2d2d2;"></div>
<div class="r" style="left:716.00px;top:1512.00px;width:2.00px;height:48.00px;background:#d2d2d2;"></div>
<div class="r" style="left:966.00px;top:1512.00px;width:2.00px;height:48.00px;background:#d2d2d2;"></div>
<div class="t" style="left:271.58px;top:1536.68px;font-size:22.00px;color:#666;">Financial Report</div>
<div class="t" style="left:481.50px;top:1536.50px;font-size:22.50px;color:#333;font-weight:bold;">Financial Data Input</div>
<div class="t" style="left:746.24px;top:1536.68px;font-size:22.00px;color:#666;">Key Metric Settings</div>
<div class="t" style="left:2359.30px;top:1536.38px;font-size:22.00px;color:#333;">Zoom 100%</div>
<div class="r" style="left:0.00px;top:1560.00px;width:2560.00px;height:40.00px;background:#fff;"></div>
<svg id="ic" width="2560" height="1600" viewBox="0 0 2560 1600">
<!-- title bar -->
<g fill="none" stroke="#2b2f37" stroke-width="3.6" stroke-linecap="round" stroke-linejoin="round">
<path d="M105.8 92.9H97Q89.4 92.9 89.4 85V49Q89.4 41.5 97 41.5H110L126.4 56V75"/>
<path d="M110 41.5V52Q110 58 116 58H126.4"/>
</g>
<text x="111.5" y="97.2" font-family="Liberation Sans" font-weight="bold" font-size="21" fill="#2b2f37" textLength="34.5" lengthAdjust="spacingAndGlyphs">XLS</text>
<g stroke="#3d424b" stroke-width="3" stroke-linecap="square">
<path d="M2450 55L2475 79M2475 55L2450 79"/>
</g>
<!-- menubar right -->
<g fill="none" stroke="#c9dfcf" stroke-width="1.5">
<circle cx="2348" cy="160" r="15.5"/>
<circle cx="2346.5" cy="153.5" r="5"/>
<path d="M2335 170.5Q2341 163.5 2350 164"/>
</g>
<circle cx="2371" cy="160" r="19.5" fill="#3b8156" stroke="#c9dfcf" stroke-width="1.5"/>
<text x="2369" y="166.3" text-anchor="middle" font-family="Liberation Sans" font-weight="bold" font-size="18" fill="#e2efe6">2</text>
<g fill="none" stroke="#dfece3" stroke-width="1.6">
<circle cx="2437" cy="157" r="10.5"/>
<path d="M2444.5 164.5L2453.5 173.5"/>
</g>
<circle cx="2520" cy="160" r="20" fill="#d8e8dc"/>
<text x="2520" y="166.2" text-anchor="middle" font-family="Liberation Sans" font-weight="bold" font-size="18" fill="#3b8156">MR</text>

<!-- toolbar group 1 -->
<g fill="none" stroke="#9a9a9a" stroke-width="2.2">
<path d="M37.7 241.4H27V217H46.5L51.7 222.2V228"/>
<path d="M32 241V229H41"/>
<path d="M44 243.5A7.5 7.5 0 1 1 53.5 240"/>
</g>
<rect x="31.8" y="216" width="10.6" height="7.4" fill="#9a9a9a"/>
<rect x="38.6" y="217.5" width="2" height="4.5" fill="#f6f6f6"/>
<path d="M50 244L55.5 244.5L55 239Z" fill="#9a9a9a"/>
<g fill="none" stroke="#333" stroke-width="2.2">
<rect x="31" y="273.5" width="18.3" height="5"/>
<path d="M30.5 292.5H25.3V279H54.8V292.5H49.5"/>
<rect x="31" y="287" width="18.3" height="10"/>
</g>
<circle cx="29.3" cy="282.7" r="1.4" fill="#333"/>
<!-- copy -->
<g fill="none" stroke="#333" stroke-width="2.2">
<path d="M115 235H109V219H126.5V225"/>
<rect x="117" y="227" width="18" height="16"/>
<path d="M120.5 231.3H131.5M120.5 235H131.5M120.5 238.8H131.5M112.5 222.8H123"/>
</g>
<rect x="111.8" y="225.8" width="2.2" height="2.2" fill="#333"/><rect x="111.8" y="230" width="2.2" height="2.2" fill="#333"/>
<!-- paste -->
<g fill="none" stroke="#333" stroke-width="2.2">
<path d="M178.5 235.2H173V219.5H195V225.5"/>
<rect x="181" y="227" width="18" height="16"/>
<path d="M184.5 231.3H195.5M184.5 235H195.5M184.5 238.8H195.5"/>
</g>
<rect x="178" y="216" width="11.8" height="5.5" rx="1" fill="#333"/>
<!-- cut -->
<g fill="none" stroke="#333" stroke-width="2">
<circle cx="236.8" cy="223" r="3.6"/>
<circle cx="236.8" cy="237.6" r="3.6"/>
<path d="M240 225L262 239.2M240 235.6L262 220.4"/>
</g>
<!-- undo / redo -->
<g fill="none" stroke="#9a9a9a" stroke-width="1.7">
<path d="M119.9 272.5L110.8 280.6L119.9 289.1M110.8 280.6H126.5A8.5 8.5 0 0 1 126.5 297.6H122"/>
<path d="M188.1 272.5L197.2 280.6L188.1 289.1M197.2 280.6H181.5A8.5 8.5 0 0 0 181.5 297.6H186"/>
</g>
<!-- painter -->
<g fill="none" stroke="#333" stroke-width="2.2">
<rect x="239.3" y="273" width="18.5" height="8"/>
<path d="M239 277H234.5V285.7H246.8V289"/>
</g>
<rect x="244" y="288" width="6" height="12" fill="#333"/>

<!-- font group -->
<g fill="none" stroke="#555" stroke-width="1.5">
<path d="M481.5 226.5L487.5 232.5L493.5 226.5"/>
<path d="M576 226.5L582 232.5L588 226.5"/>
<path d="M734.5 229L740.3 234.8L746 229"/>
<path d="M530.5 284.5L536.2 290.2L542 284.5"/>
<path d="M598 284.5L603.8 290.2L609.6 284.5"/>
<path d="M666.7 284.5L672.4 290.2L678 284.5"/>
<path d="M734 284.5L739.8 290.2L745.6 284.5"/>
</g>
<text x="607.5" y="240" font-family="Liberation Sans" font-size="27" fill="#333">A</text>
<path d="M623.7 221L627.3 215.5L631 221Z" fill="#333"/>
<text x="652.5" y="240" font-family="Liberation Sans" font-size="23" fill="#333">A</text>
<path d="M667.5 219.8L675 219.8L671.2 225Z" fill="#333"/>
<text x="693" y="240" font-family="Liberation Sans" font-size="27" fill="#333">A</text>
<text x="711" y="240" font-family="Liberation Sans" font-size="20" fill="#333">a</text>
<text x="318" y="296" font-family="Liberation Sans" font-weight="bold" font-size="26" fill="#333">B</text>
<path d="M366 277.5H378M363.5 296H375.5M373 277.5L367 296" stroke="#333" stroke-width="1.8" fill="none"/>
<text x="406" y="296" font-family="Liberation Sans" font-size="26" fill="#333" textLength="20" lengthAdjust="spacingAndGlyphs">U</text>
<path d="M406 298.5H426" stroke="#333" stroke-width="1.8"/>
<text x="449" y="296" font-family="Liberation Sans" font-size="26" fill="#333">S</text>
<path d="M448 288H472" stroke="#333" stroke-width="1.8"/>
<text x="491" y="296" font-family="Liberation Sans" font-size="26" fill="#333">A</text>
<text x="510.5" y="298" font-family="Liberation Sans" font-weight="bold" font-size="11" fill="#333">2</text>
<text x="561" y="296" font-family="Liberation Sans" font-size="27" fill="#333">A</text>
<rect x="558" y="298.3" width="28" height="5.7" fill="#f00"/>
<g fill="none" stroke="#333" stroke-width="2">
<rect x="629" y="280" width="17" height="12.5" rx="4" transform="rotate(42 637.5 286.2)"/>
<path d="M631 272L639.5 278"/>
</g>
<circle cx="649" cy="292.5" r="2.6" fill="#333"/>
<rect x="625.8" y="298.3" width="28.2" height="5.7" fill="#ff0"/>
<rect x="697" y="275" width="24.5" height="24" fill="none" stroke="#333" stroke-width="2.2"/>
<path d="M709.2 278V297M700 287H719" stroke="#999" stroke-width="1.2" stroke-dasharray="1.6 2.2"/>

<!-- alignment -->
<g fill="none" stroke="#222" stroke-width="2.1">
<path d="M802 221H824M802 225H824M813 226V242M809 232L813 227L817 232"/>
<path d="M854 229H876M854 233H876M865 218V227M865 235V243.6M861.5 222.5L865 226.5L868.5 222.5M861.5 239.5L865 235.5L868.5 239.5"/>
<path d="M906 237H928M906 241H928M917 220V235.5M913 230.5L917 235.5L921 230.5"/>
<path d="M978 225.5Q984 225.5 984 231Q984 237 978 237H971M974 233.5L970.5 237L974 240.5"/>
<path d="M1018.5 243.5L1030 232"/>
<path d="M1048.5 228.5L1054 234.5L1059.6 228.5M1048.5 284.5L1054 290.2L1059.6 284.5" stroke="#555" stroke-width="1.5"/>
</g>
<text x="955.5" y="229.8" font-family="Liberation Sans" font-weight="bold" font-size="12.5" fill="#222">AB</text>
<text x="0" y="0" font-family="Liberation Sans" font-weight="bold" font-size="12.5" fill="#222" transform="translate(1011.5 239.5) rotate(-45)">AB</text>
<path d="M1026 227.8H1034V235.8Z" fill="#222"/>
<g stroke="#222" stroke-width="2.2">
<path d="M802 277H826M802 281H816M802 285H822M802 289H816M802 293H816M802 297H826"/>
<path d="M854 277H878M860 281H872M856 285H876M860 289H872M860 293H872M854 297H878"/>
<path d="M906 277H930M916.4 281H930M910 285H930M916.4 289H930M916.4 293H930M906 297H930" stroke="#111"/>
<path d="M958 277H982M958 281H982M958 285H982M958 289H982M958 293H982M958 297H982"/>
</g>
<g fill="none" stroke="#333" stroke-width="2">
<rect x="1009" y="277" width="26.5" height="20"/>
<path d="M1009 281.5H1035.5M1009 292.5H1035.5M1018 277V281.5M1027 277V281.5M1018 292.5V297M1027 292.5V297"/>
<path d="M1012 287H1033M1015 284.5L1012.5 287L1015 289.5M1030 284.5L1032.5 287L1030 289.5M1019 284.5V289.5M1026 284.5V289.5" stroke-width="1.6"/>
</g>

<!-- sum -->
<g fill="none" stroke="#333" stroke-width="2">
<path d="M1138 222.5V219H1119L1128.5 231L1119 243H1138V239"/>
<path d="M1154 228.5L1160 234.5L1165.7 228.5M1218 228.5L1224 234.5L1230 228.5M1154 284.5L1160 290.5L1165.7 284.5M1218 284.5L1224 290.5L1230 284.5" stroke="#555" stroke-width="1.5"/>
<rect x="1179" y="219" width="24" height="24" stroke="#555"/>
<path d="M1179 225H1203M1191 228V239.5M1187 235.5L1191 239.5L1195 235.5" stroke="#555"/>
<path d="M1143.5 277H1119L1112.5 286.5L1119 296.5H1143.5Z"/>
<circle cx="1120.8" cy="286.5" r="1.8"/>
<path d="M1130 282H1138M1130 286.5H1138M1130 291H1138"/>
<path d="M1186 296.5H1202M1184 296.5L1179 291.5Q1177 289.5 1179 287.5L1191 275.5Q1193 273.5 1195 275.5L1201 281.5Q1203 283.5 1201 285.5L1190 296.5M1185 282L1195 292"/>
</g>
<!-- sort -->
<g font-family="Liberation Sans" font-weight="bold" font-size="13.5" fill="#333">
<text x="1285.5" y="227">A</text><text x="1286" y="243.6">Z</text>
<text x="1349.5" y="227">Z</text><text x="1349" y="243.6">A</text>
</g>
<g fill="none" stroke="#333" stroke-width="2">
<path d="M1307 216V243M1302 238L1307 243.4L1312 238"/>
<path d="M1371 216V243M1366 238L1371 243.4L1376 238"/>
</g>
<path d="M1286 276H1309.5L1300 287.5V297.3L1295.5 292.8V287.5Z" fill="#333"/>
<path d="M1348.5 276H1371.5L1362 287.5V297.3L1357.5 292.8V287.5Z" fill="#999"/>
<path d="M1367 291L1375.5 299M1375.5 291L1367 299" stroke="#aaa" stroke-width="1.5"/>
<!-- number format -->
<path d="M1674 226.5L1680 232.5L1686 226.5M1470 284.5L1476 290.3L1482 284.5" fill="none" stroke="#555" stroke-width="1.5"/>
<rect x="1432" y="276" width="28" height="16" fill="#333"/>
<ellipse cx="1446" cy="284" rx="9" ry="5" fill="#f6f6f6"/>
<circle cx="1446" cy="284" r="2.8" fill="#333"/>
<path d="M1429 283V297H1456V294.5" fill="none" stroke="#333" stroke-width="2.2"/>
<text x="1507" y="297" font-family="Liberation Sans" font-size="25" fill="#333">%</text>
<circle cx="1570" cy="282.5" r="6" fill="#333"/><path d="M1572 283Q1577 283 1576 289Q1575 294 1567.5 297.5L1566.5 296Q1571 292.5 1571 288Z" fill="#333"/>
<text x="1620" y="285.5" font-family="Liberation Sans" font-size="17" fill="#333">.0</text>
<path d="M1611 292.7H1636M1615.5 288.5L1611 292.7L1615.5 297" fill="none" stroke="#333" stroke-width="1.8"/>
<text x="1660.5" y="285.5" font-family="Liberation Sans" font-size="17" fill="#333">.00</text>
<path d="M1660 292.7H1686M1681.5 288.5L1686 292.7L1681.5 297" fill="none" stroke="#333" stroke-width="1.8"/>
<!-- cells -->
<g fill="none" stroke="#333" stroke-width="2.2">
<path d="M1742 220.8H1752M1747 216V225.5"/>
<path d="M1742 277H1752"/>
<path d="M1782 228.5L1788 234.5L1794 228.5M1782 284.5L1788 290.5L1794 284.5M1888 228.5L1894 234.5L1900 228.5M1888 284.5L1894 290.5L1900 284.5" stroke="#555" stroke-width="1.5"/>
</g>
<g>
<path d="M1754.3 222H1768V241.7H1748V228.2H1754.3Z" fill="#333"/>
<g fill="#f6f6f6">
<rect x="1756.3" y="224" width="4" height="3.6"/><rect x="1762.3" y="224" width="3.7" height="3.6"/>
<rect x="1750" y="230" width="4.2" height="3.6"/><rect x="1756.3" y="230" width="4" height="3.6"/><rect x="1762.3" y="230" width="3.7" height="3.6"/>
<rect x="1750" y="236" width="4.2" height="3.7"/><rect x="1756.3" y="236" width="4" height="3.7"/><rect x="1762.3" y="236" width="3.7" height="3.7"/>
</g>
</g>
<g transform="translate(0 56)">
<path d="M1754.3 222H1768V241.7H1748V228.2H1754.3Z" fill="#333"/>
<g fill="#f6f6f6">
<rect x="1756.3" y="224" width="4" height="3.6"/><rect x="1762.3" y="224" width="3.7" height="3.6"/>
<rect x="1750" y="230" width="4.2" height="3.6"/><rect x="1756.3" y="230" width="4" height="3.6"/><rect x="1762.3" y="230" width="3.7" height="3.6"/>
<rect x="1750" y="236" width="4.2" height="3.7"/><rect x="1756.3" y="236" width="4" height="3.7"/><rect x="1762.3" y="236" width="3.7" height="3.7"/>
</g>
</g>

<rect x="1849" y="217" width="26" height="24" fill="#f6f6f6" stroke="#333" stroke-width="2"/>
<rect x="1850" y="225" width="24" height="7" fill="#ccc"/>
<rect x="1850" y="232" width="24" height="8" fill="#888"/>
<path d="M1849 224.5H1875M1849 232H1863" stroke="#333" stroke-width="2"/>
<rect x="1859" y="229" width="16.5" height="16.5" fill="#f6f6f6" stroke="#333" stroke-width="2"/>
<path d="M1862.5 233.5L1871 237L1862.5 240.5" fill="none" stroke="#555" stroke-width="1.8"/>
<rect x="1847" y="277" width="30" height="20" fill="none" stroke="#333" stroke-width="2"/>
<rect x="1847" y="276" width="30" height="4" fill="#333"/>
<path d="M1847 285H1877M1847 291H1877M1857 279V297M1867 279V297" stroke="#333" stroke-width="2"/>
<!-- gallery dd -->
<path d="M2364.5 251.5L2376 263L2387.5 251.5" fill="none" stroke="#333" stroke-width="2.4"/>
<!-- replace / select -->
<text x="2447" y="222.8" font-family="Liberation Sans" font-weight="bold" font-size="10.5" fill="#333">A</text>
<text x="2451.5" y="239" font-family="Liberation Sans" font-weight="bold" font-size="11" fill="#333">B</text>
<path d="M2443 219.5Q2434 223 2436 232Q2438 236 2449 236M2445.5 232.5L2449 236L2445.5 239.5" fill="none" stroke="#333" stroke-width="1.8"/>
<rect x="2433" y="273" width="26.5" height="24" fill="none" stroke="#333" stroke-width="2" stroke-dasharray="3.5 3"/>
<path d="M2446.5 282L2446.5 302L2451 297.5L2455 305L2457.5 303.5L2453.5 296.5L2460 296Z" fill="#f6f6f6" stroke="#333" stroke-width="1.6"/>

<path d="M100.5 405.5H123.8V382.4Z" fill="#999"/>
<!-- formula bar chevrons -->
<path d="M256.5 341L262 345.8L267.5 341M2458.5 340.5L2464 345.5L2469.5 340.5" fill="none" stroke="#444" stroke-width="2.3"/>

<!-- left sidebar -->
<g fill="none" stroke="#333" stroke-width="2">
<circle cx="37.5" cy="380.8" r="10"/>
<path d="M44.8 388L53 396.5"/>
<path d="M31 467.5H26.5V448.5H53.5V467.5H36L30.5 472.5Z"/>
<path d="M32.5 455H48.5M32.5 461H44"/>
<path d="M27 544.5L24.5 546V524.5H51.5V531"/>
<path d="M33 532H55V551.5L51 548.5H33Z"/>
<path d="M36 616.5L41 622.5L53.5 610" stroke-width="2.4"/>
<circle cx="40.7" cy="688.3" r="14"/>
<path d="M40.7 685V697" stroke-width="2.4"/>
</g>
<g fill="#333"><rect x="36.5" y="539.5" width="3.5" height="3.5"/><rect x="42" y="539.5" width="3.5" height="3.5"/><rect x="47.5" y="539.5" width="3.5" height="3.5"/>
<circle cx="40.7" cy="680" r="1.7"/></g>
<text x="25.5" y="613.5" font-family="Liberation Sans" font-weight="bold" font-size="15.5" fill="#333" textLength="28" lengthAdjust="spacingAndGlyphs">ABC</text>

<!-- right sidebar -->
<rect x="2509" y="373" width="28.5" height="22" fill="none" stroke="#333" stroke-width="2"/>
<path d="M2515 373V395.5M2531 373V395.5M2509 379H2537.5M2509 388.8H2537.5" stroke="#bbb" stroke-width="1.3"/>
<rect x="2515" y="379" width="16.5" height="10" fill="#aaa" stroke="#333" stroke-width="2"/>
<g fill="none" stroke="#aaa" stroke-width="2">
<rect x="2507" y="451" width="30.5" height="20"/>
<path d="M2507 458H2537.5M2507 464.5H2537.5M2517 451V471M2527 451V471"/>
<path d="M2513 540.5H2508V524H2522.5V530"/>
<circle cx="2527" cy="540.5" r="9"/>
<rect x="2509" y="599" width="26" height="26.5"/>
<path d="M2509.5 618L2516 611L2522 616L2529 609.5L2535 614"/>
<circle cx="2514.5" cy="605" r="2"/>
<rect x="2508.5" y="691" width="6" height="10.5"/>
<rect x="2518.5" y="684" width="6.5" height="17.5"/>
<rect x="2529" y="676" width="6.5" height="25.5"/>
<path d="M2522 742V766M2528 742V766M2519 742H2530"/>
<path d="M2512.5 851Q2521.5 842.5 2530.5 851"/>
<path d="M2508.5 921V891.5H2536V900M2508.5 921H2522M2513 897.5H2530.5M2513 903.5H2527"/>
</g>
<path d="M2522 742Q2511 742 2511 749Q2511 756 2522 756Z" fill="#aaa"/>
<text x="2510.5" y="834" font-family="Liberation Sans" font-size="25" fill="#aaa">Ta</text>
<path d="M2523 907H2540L2533.5 914.5V925L2529.5 922V914.5Z" fill="#aaa"/>

<!-- scrollbar arrows -->
<g fill="#aaa">
<path d="M2459 392L2465.5 385L2472 392Z"/>
<path d="M2459 1463.5L2472 1463.5L2465.5 1470.5Z"/>
<path d="M98 1488L98 1502L90.5 1495Z"/>
<path d="M2433 1488L2433 1502L2440.5 1495Z"/>
</g>

<!-- tab bar -->
<g fill="none" stroke-width="2">
<path d="M49.5 1524.8L38 1536.2L49.5 1547.5M78.3 1524.8L89.8 1536.2L78.3 1547.5" stroke="#999"/>
<path d="M155.8 1537H177.8M166.8 1526V1548" stroke="#333" stroke-width="2.4"/>
<path d="M196 1526.5H215.8M196 1532.8H215.8M196 1538.9H215.8M196 1545H215.8" stroke="#444" stroke-width="2.2"/>
<path d="M2309 1536.8H2330.5M2510 1536.8H2532M2521 1526V1548" stroke="#333" stroke-width="2.4"/>
</g>
<path d="M1932 302.3H2130" stroke="#444" stroke-width="2" stroke-dasharray="3.4 2.8"/>
<g fill="none" stroke="#333" stroke-width="2.2"><path d="M121.2 837V846.3H103"/><path d="M108.5 841.5L102.5 846.3L108.5 851"/><path d="M102.8 890V898.2H120.5"/><path d="M115 893.5L121 898.2L115 903"/><path d="M127.5 1358V1367.5H109"/><path d="M114.5 1362.8L108.5 1367.5L114.5 1372.2"/><path d="M107.5 1407.5V1416.5H126"/><path d="M120.5 1411.8L126.5 1416.5L120.5 1421.2"/></g>
</svg>
<div id="frame"></div>
</body></html>
